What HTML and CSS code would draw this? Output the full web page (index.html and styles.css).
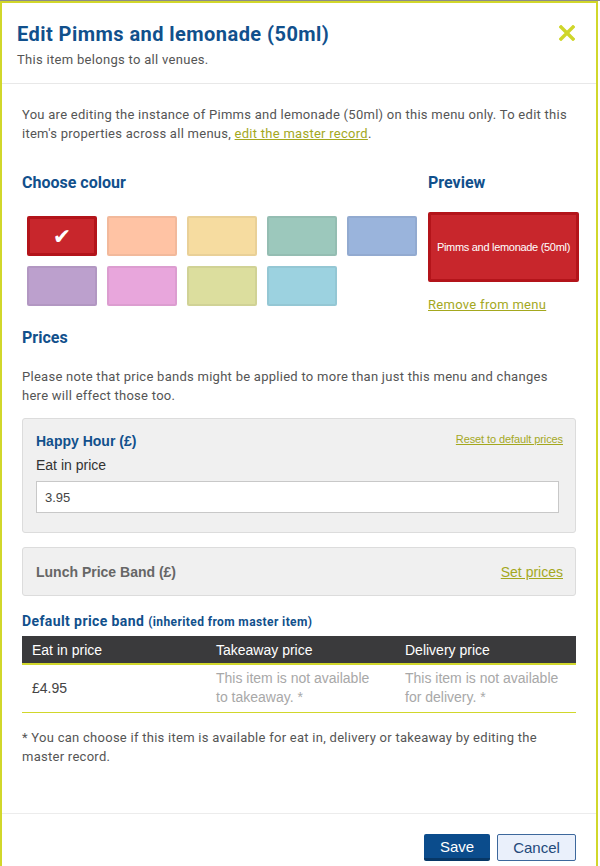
FILE: index.html
```html
<!DOCTYPE html>
<html>
<head>
<meta charset="utf-8">
<link rel="stylesheet" href="styles.css">
</head>
<body>
<div class="modal">
  <div class="modal-header">
    <div class="header-text">
      <h1 class="title">Edit Pimms and lemonade (50ml)</h1>
      <p class="subtitle">This item belongs to all venues.</p>
    </div>
    <svg class="close" width="16" height="16" viewBox="0 0 16 16"><path d="M2 2 L14 14 M14 2 L2 14" stroke="#cfd62a" stroke-width="3.4" stroke-linecap="square"/></svg>
  </div>
  <div class="modal-body">
    <p class="intro">You are editing the instance of Pimms and lemonade (50ml) on this menu only. To edit this item's properties across all menus, <a class="link" href="#">edit the master record</a>.</p>

    <div class="colour-section">
      <div class="colour-col">
        <h2 class="section-title">Choose colour</h2>
        <div class="swatches">
          <div class="swatch sw-red selected">✔</div>
          <div class="swatch sw-peach"></div>
          <div class="swatch sw-yellow"></div>
          <div class="swatch sw-teal"></div>
          <div class="swatch sw-blue"></div>
          <div class="swatch sw-purple"></div>
          <div class="swatch sw-pink"></div>
          <div class="swatch sw-olive"></div>
          <div class="swatch sw-sky"></div>
        </div>
      </div>
      <div class="preview-col">
        <h2 class="section-title">Preview</h2>
        <div class="preview-box">Pimms and lemonade (50ml)</div>
        <a class="link remove" href="#">Remove from menu</a>
      </div>
    </div>

    <h2 class="section-title prices-title">Prices</h2>
    <p class="note">Please note that price bands might be applied to more than just this menu and changes here will effect those too.</p>

    <div class="band band-open">
      <div class="band-head">
        <span class="band-name">Happy Hour (£)</span>
        <a class="link small-link" href="#">Reset to default prices</a>
      </div>
      <label class="field-label">Eat in price</label>
      <div class="input">3.95</div>
    </div>

    <div class="band band-closed">
      <div class="band-head">
        <span class="band-name muted">Lunch Price Band (£)</span>
        <a class="link set-link" href="#">Set prices</a>
      </div>
    </div>

    <h3 class="default-title">Default price band <span class="inherited">(inherited from master item)</span></h3>
    <table class="prices-table">
      <thead>
        <tr><th class="c1">Eat in price</th><th class="c2">Takeaway price</th><th class="c3">Delivery price</th></tr>
      </thead>
      <tbody>
        <tr><td>£4.95</td><td class="na">This item is not available to takeaway. *</td><td class="na">This item is not available for delivery. *</td></tr>
      </tbody>
    </table>
    <p class="footnote">* You can choose if this item is available for eat in, delivery or takeaway by editing the master record.</p>
  </div>
  <div class="modal-footer">
    <button class="btn btn-save">Save</button>
    <button class="btn btn-cancel">Cancel</button>
  </div>
</div>
</body>
</html>
```

FILE: styles.css
```css
html, body {
  margin: 0;
  padding: 0;
  background: #ffffff;
}
body {
  border-top: 1px solid #8c8c8c;
  font-family: Roboto, "DejaVu Sans", sans-serif;
  color: #555555;
}
.modal {
  width: 594px;
  border: 2px solid #d1d72b;
  border-bottom: none;
  background: #fff;
  min-height: 900px;
}
.modal-header {
  display: flex;
  justify-content: space-between;
  align-items: flex-start;
  padding: 19px 21px 0 15px;
  height: 61px;
  border-bottom: 1px solid #e8e8e8;
}
.title {
  margin: 0;
  font-size: 20px;
  line-height: 24px;
  font-weight: 700;
  color: #11508c;
  letter-spacing: 0.45px;
}
.subtitle {
  margin: 5px 0 0;
  font-size: 13px;
  line-height: 18px;
  color: #555;
  letter-spacing: 0.3px;
}
.close {
  margin-top: 3px;
}
.modal-body {
  padding: 0 20px 0 20px;
}
.intro {
  margin: 21px 0 0;
  font-size: 13px;
  line-height: 19px;
  color: #555;
  letter-spacing: 0.27px;
}
.link {
  color: #a4a81e;
  text-decoration: underline;
}
.section-title {
  margin: 0;
  font-size: 16px;
  line-height: 20px;
  font-weight: 700;
  color: #11508c;
}
.colour-section {
  display: flex;
  margin-top: 30px;
}
.colour-col {
  flex: 0 0 406px;
}
.swatches {
  display: flex;
  flex-wrap: wrap;
  width: 400px;
  margin-top: 23px;
}
.swatch {
  box-sizing: border-box;
  width: 70px;
  height: 40px;
  margin: 0 5px 10px 5px;
  border-radius: 2px;
  border: 2px solid rgba(0,0,0,0.05);
  display: flex;
  align-items: center;
  justify-content: center;
  color: #fff;
  font-size: 22px;
  font-family: "DejaVu Sans", sans-serif;
}
.sw-red { background: #c8262c; border: 3px solid #b3141a; }
.sw-peach { background: #ffc3a4; }
.sw-yellow { background: #f6dca0; }
.sw-teal { background: #9cc8bc; }
.sw-blue { background: #9ab4dc; }
.sw-purple { background: #bca0cd; }
.sw-pink { background: #e8a6dc; }
.sw-olive { background: #dcde9e; }
.sw-sky { background: #9cd2e0; }
.preview-col {
  flex: 0 0 151px;
  display: flex;
  flex-direction: column;
  align-items: flex-start;
}
.preview-box {
  box-sizing: border-box;
  margin-top: 19px;
  width: 151px;
  height: 70px;
  background: #c8262c;
  border: 3px solid #b3141a;
  border-radius: 2px;
  color: #fff;
  font-family: "Liberation Sans", Arial, sans-serif;
  font-size: 11px;
  letter-spacing: -0.3px;
  display: flex;
  align-items: center;
  justify-content: center;
}
.remove {
  margin-top: 15px;
  font-size: 13px;
  line-height: 16px;
  letter-spacing: 0.3px;
}
.prices-title {
  margin-top: 12px;
}
.note {
  margin: 19px 0 0;
  font-size: 13px;
  line-height: 19px;
  letter-spacing: 0.27px;
}
.band {
  background: #f0f0f0;
  border: 1px solid #dcdcdc;
  border-radius: 3px;
  padding: 0 12px 0 13px;
}
.band-open {
  margin-top: 13px;
  height: 113px;
}
.band-closed {
  margin-top: 14px;
  height: 47px;
}
.band-head {
  display: flex;
  justify-content: space-between;
  align-items: center;
  height: 44px;
}
.band-closed .band-head {
  height: 47px;
}
.band-name {
  font-family: "Liberation Sans", Arial, sans-serif;
  font-weight: 700;
  font-size: 14px;
  color: #11508c;
}
.band-name.muted {
  color: #666;
}
.small-link {
  font-family: "Liberation Sans", Arial, sans-serif;
  font-size: 11px;
  letter-spacing: -0.1px;
  margin-top: -5px;
}
.set-link {
  font-family: "Liberation Sans", Arial, sans-serif;
  font-size: 14px;
}
.field-label {
  display: block;
  font-family: "Liberation Sans", Arial, sans-serif;
  font-size: 14px;
  color: #333;
  line-height: 16px;
  margin-top: -6px;
}
.input {
  box-sizing: border-box;
  margin-top: 8px;
  width: 523px;
  height: 32px;
  background: #fff;
  border: 1px solid #c8c8c8;
  padding: 0 8px;
  display: flex;
  align-items: center;
  font-family: "Liberation Sans", Arial, sans-serif;
  font-size: 13px;
  color: #444;
}
.default-title {
  margin: 16px 0 0;
  font-size: 14px;
  line-height: 18px;
  font-weight: 700;
  color: #11508c;
  letter-spacing: 0.4px;
}
.inherited {
  font-size: 12px;
  letter-spacing: 0.4px;
}
.prices-table {
  width: 100%;
  margin-top: 5px;
  border-collapse: collapse;
  font-family: "Liberation Sans", Arial, sans-serif;
  font-size: 14px;
}
.prices-table th {
  background: #3a3a3c;
  color: #fff;
  font-weight: 400;
  text-align: left;
  height: 27px;
  padding: 0 10px;
  border-bottom: 2px solid #d1d72b;
}
.prices-table th.c1 { width: 164px; }
.prices-table th.c2 { width: 169px; }
.prices-table td {
  padding: 4px 16px 5px 10px;
  color: #444;
  line-height: 19px;
  vertical-align: middle;
  border-bottom: 1px solid #d1d72b;
}
.prices-table td.na {
  color: #a8a8a8;
}
.footnote {
  margin: 15px 0 0;
  font-size: 13px;
  line-height: 19px;
  letter-spacing: 0.27px;
}
.modal-footer {
  margin-top: 47px;
  border-top: 1px solid #ececec;
  display: flex;
  justify-content: flex-end;
  gap: 7px;
  padding: 20px 20px 0 0;
}
.btn {
  box-sizing: border-box;
  height: 27px;
  font-family: "Liberation Sans", Arial, sans-serif;
  font-size: 15px;
  border-radius: 2px;
  cursor: pointer;
}
.btn-save {
  width: 66px;
  background: #0b4c8c;
  color: #fff;
  border: none;
  border-bottom: 3px solid #073766;
}
.btn-cancel {
  width: 79px;
  background: #eaf0fb;
  color: #23497a;
  border: 1px solid #3d689c;
}
```
